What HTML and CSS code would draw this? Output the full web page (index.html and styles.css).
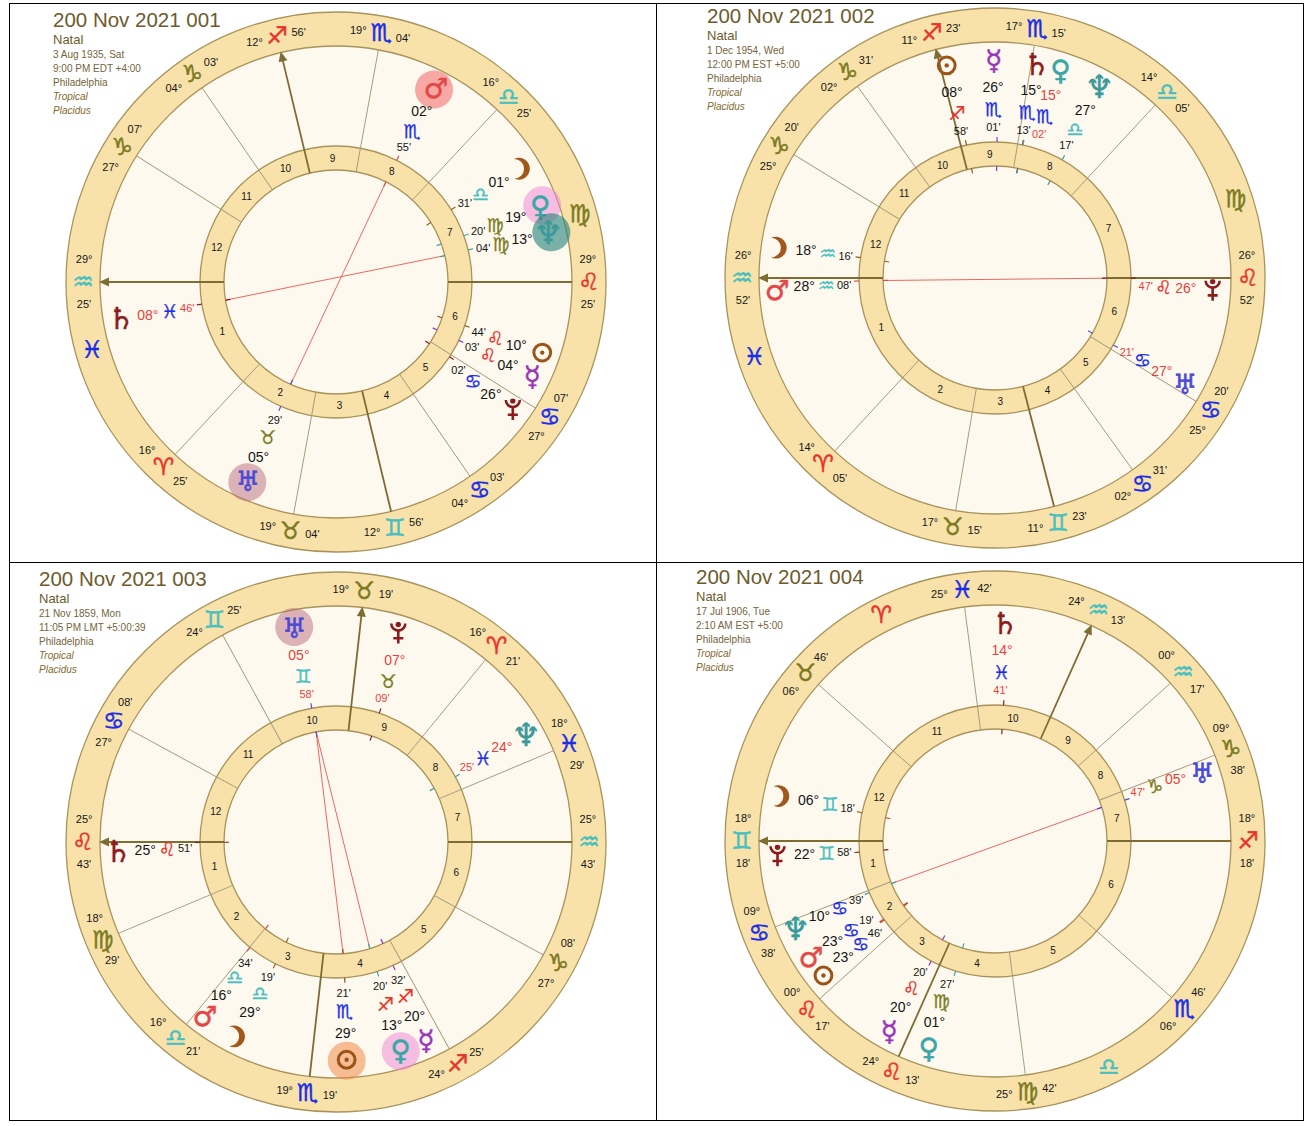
FILE: index.html
```html
<!DOCTYPE html>
<html lang="en">
<head>
<meta charset="utf-8">
<title>Natal charts</title>
<link rel="stylesheet" href="styles.css">
</head>
<body>
<div class="sheet">

<!-- ============ CHART 1 ============ -->
<section class="panel p1">
<svg class="chart" width="646" height="558" viewBox="0 0 646 558">
<defs>
<symbol id="plu" viewBox="-10 -11 20 22">
<path d="M-7,-9.5 A7,7 0 0 0 7,-9.5" fill="none" stroke="currentColor" stroke-width="2.6"/>
<circle cx="0" cy="-8.6" r="2.7" fill="currentColor"/>
<line x1="0" y1="-2.5" x2="0" y2="10.5" stroke="currentColor" stroke-width="2.6"/>
<line x1="-5" y1="5.2" x2="5" y2="5.2" stroke="currentColor" stroke-width="2.6"/>
</symbol>
<symbol id="sun" viewBox="-11 -11 22 22">
<circle r="8.4" fill="none" stroke="currentColor" stroke-width="3"/>
<circle r="2.2" fill="currentColor"/>
</symbol>
<symbol id="moo" viewBox="-11 -11 22 22">
<path d="M-7.4,-9 A10,10 0 1 1 -7.4,9 A9,9 0 0 0 -7.4,-9 Z" fill="currentColor"/>
</symbol>
</defs>
<g transform="translate(326 278)">
<circle class="ring" r="270"/><circle class="field" r="236"/><circle class="ring" r="136"/><circle class="field" r="112"/>
<line class="hl" transform="rotate(-227)" x1="112" x2="236"/>
<line class="hl" transform="rotate(-259.65)" x1="112" x2="236"/>
<line class="hl" transform="rotate(-304.6)" x1="112" x2="236"/>
<line class="hl" transform="rotate(-327.7)" x1="112" x2="236"/>
<line class="hl" transform="rotate(-47)" x1="112" x2="236"/>
<line class="hl" transform="rotate(-79.65)" x1="112" x2="236"/>
<line class="hl" transform="rotate(-124.6)" x1="112" x2="236"/>
<line class="hl" transform="rotate(-147.7)" x1="112" x2="236"/>
<line class="ax" transform="rotate(0)" x1="112" x2="236"/>
<line class="ax" transform="rotate(-283.5)" x1="112" x2="236"/>
<g transform="rotate(-180)"><line class="ax" x1="112" x2="230"/><polygon class="axp" points="237,0 227,-4.5 227,4.5"/></g>
<g transform="rotate(-103.5)"><line class="ax" x1="112" x2="230"/><polygon class="axp" points="237,0 227,-4.5 227,4.5"/></g>
<line class="asp" x1="-110.5" y1="18.2" x2="108.8" y2="-26.4"/>
<line class="asp" x1="50" y1="-100.2" x2="-45.4" y2="102.4"/>
<g class="ma" transform="rotate(-63.5)"><line class="tk" x1="107" x2="112"/><line class="tk" x1="136" x2="141"/></g>
<g class="mo" transform="rotate(-32.1)"><line class="tk" x1="107" x2="112"/><line class="tk" x1="136" x2="141"/></g>
<g class="ve" transform="rotate(-19.9)"><line class="tk" x1="107" x2="112"/><line class="tk" x1="136" x2="141"/></g>
<g class="ne" transform="rotate(-13.65)"><line class="tk" x1="107" x2="112"/><line class="tk" x1="136" x2="141"/></g>
<g class="su" transform="rotate(-341.3)"><line class="tk" x1="107" x2="112"/><line class="tk" x1="136" x2="141"/></g>
<g class="me" transform="rotate(-334.6)"><line class="tk" x1="107" x2="112"/><line class="tk" x1="136" x2="141"/></g>
<g class="pl" transform="rotate(-326.6)"><line class="tk" x1="107" x2="112"/><line class="tk" x1="136" x2="141"/></g>
<g class="sa" transform="rotate(-189.35)"><line class="tk" x1="107" x2="112"/><line class="tk" x1="136" x2="141"/></g>
<g class="ur" transform="rotate(-246.06)"><line class="tk" x1="107" x2="112"/><line class="tk" x1="136" x2="141"/></g>
<text class="hn" transform="rotate(-203.5) translate(124) rotate(203.5)">1</text>
<text class="hn" transform="rotate(-243.3) translate(124) rotate(243.3)">2</text>
<text class="hn" transform="rotate(-271.6) translate(124) rotate(271.6)">3</text>
<text class="hn" transform="rotate(-294) translate(124) rotate(294)">4</text>
<text class="hn" transform="rotate(-316.2) translate(124) rotate(316.2)">5</text>
<text class="hn" transform="rotate(-343.9) translate(124) rotate(343.9)">6</text>
<text class="hn" transform="rotate(-23.5) translate(124) rotate(23.5)">7</text>
<text class="hn" transform="rotate(-63.3) translate(124) rotate(63.3)">8</text>
<text class="hn" transform="rotate(-91.6) translate(124) rotate(91.6)">9</text>
<text class="hn" transform="rotate(-114) translate(124) rotate(114)">10</text>
<text class="hn" transform="rotate(-136.2) translate(124) rotate(136.2)">11</text>
<text class="hn" transform="rotate(-163.9) translate(124) rotate(163.9)">12</text>
<text class="cd" transform="rotate(-174.7) translate(253) rotate(174.7)">29°</text><text class="cs ai" transform="rotate(-180) translate(253) rotate(180)">♒&#xFE0E;</text><text class="cd" transform="rotate(-185) translate(253) rotate(185)">25'</text>
<text class="cd" transform="rotate(-221.7) translate(253) rotate(221.7)">16°</text><text class="cs fi" transform="rotate(-227) translate(253) rotate(227)">♈&#xFE0E;</text><text class="cd" transform="rotate(-232) translate(253) rotate(232)">25'</text>
<text class="cd" transform="rotate(-254.35) translate(253) rotate(254.35)">19°</text><text class="cs ea" transform="rotate(-259.65) translate(253) rotate(259.65)">♉&#xFE0E;</text><text class="cd" transform="rotate(-264.65) translate(253) rotate(264.65)">04'</text>
<text class="cd" transform="rotate(-278.2) translate(253) rotate(278.2)">12°</text><text class="cs ai" transform="rotate(-283.5) translate(253) rotate(283.5)">♊&#xFE0E;</text><text class="cd" transform="rotate(-288.5) translate(253) rotate(288.5)">56'</text>
<text class="cd" transform="rotate(-299.3) translate(253) rotate(299.3)">04°</text><text class="cs wa" transform="rotate(-304.6) translate(253) rotate(304.6)">♋&#xFE0E;</text><text class="cd" transform="rotate(-309.6) translate(253) rotate(309.6)">03'</text>
<text class="cd" transform="rotate(-322.4) translate(253) rotate(322.4)">27°</text><text class="cs wa" transform="rotate(-327.7) translate(253) rotate(327.7)">♋&#xFE0E;</text><text class="cd" transform="rotate(-332.7) translate(253) rotate(332.7)">07'</text>
<text class="cd" transform="rotate(-5.3) translate(253) rotate(5.3)">29°</text><text class="cs fi" transform="rotate(0) translate(253) rotate(0)">♌&#xFE0E;</text><text class="cd" transform="rotate(-355) translate(253) rotate(355)">25'</text>
<text class="cd" transform="rotate(-52.3) translate(253) rotate(52.3)">16°</text><text class="cs ai" transform="rotate(-47) translate(253) rotate(47)">♎&#xFE0E;</text><text class="cd" transform="rotate(-42) translate(253) rotate(42)">25'</text>
<text class="cd" transform="rotate(-84.95) translate(253) rotate(84.95)">19°</text><text class="cs wa" transform="rotate(-79.65) translate(253) rotate(79.65)">♏&#xFE0E;</text><text class="cd" transform="rotate(-74.65) translate(253) rotate(74.65)">04'</text>
<text class="cd" transform="rotate(-108.8) translate(253) rotate(108.8)">12°</text><text class="cs fi" transform="rotate(-103.5) translate(253) rotate(103.5)">♐&#xFE0E;</text><text class="cd" transform="rotate(-98.5) translate(253) rotate(98.5)">56'</text>
<text class="cd" transform="rotate(-129.9) translate(253) rotate(129.9)">04°</text><text class="cs ea" transform="rotate(-124.6) translate(253) rotate(124.6)">♑&#xFE0E;</text><text class="cd" transform="rotate(-119.6) translate(253) rotate(119.6)">03'</text>
<text class="cd" transform="rotate(-153) translate(253) rotate(153)">27°</text><text class="cs ea" transform="rotate(-147.7) translate(253) rotate(147.7)">♑&#xFE0E;</text><text class="cd" transform="rotate(-142.7) translate(253) rotate(142.7)">07'</text>
<text class="cs wa" transform="rotate(-195.6) translate(253) rotate(195.6)">♓&#xFE0E;</text>
<text class="cs ea" transform="rotate(-15.6) translate(253) rotate(15.6)">♍&#xFE0E;</text>
<!-- planets -->
<circle class="hlc h-ma" r="19" transform="rotate(-63) translate(216)"/>
<text class="pg ma" transform="rotate(-62.7) translate(218) rotate(62.7)">♂</text>
<text class="pd" transform="rotate(-63.3) translate(191) rotate(63.3)">02°</text><text class="ps wa" transform="rotate(-63.3) translate(169) rotate(63.3)">♏&#xFE0E;</text><text class="pm" transform="rotate(-63.3) translate(151) rotate(63.3)">55'</text>
<use href="#moo" class="mo" x="-12" y="-12" width="24" height="24" transform="rotate(-31.3) translate(218) rotate(31.3)"/>
<text class="pd" transform="rotate(-31.4) translate(191) rotate(31.4)">01°</text><text class="ps ai" transform="rotate(-31.4) translate(169) rotate(31.4)">♎&#xFE0E;</text><text class="pm" transform="rotate(-31.4) translate(151) rotate(31.4)">31'</text>
<circle class="hlc h-ve" r="19" transform="rotate(-20.4) translate(220)"/>
<text class="pg ve" transform="rotate(-20.4) translate(218) rotate(20.4)">♀</text>
<text class="pd" transform="rotate(-19.8) translate(191) rotate(19.8)">19°</text><text class="ps ea" transform="rotate(-19.8) translate(169) rotate(19.8)">♍&#xFE0E;</text><text class="pm" transform="rotate(-19.8) translate(151) rotate(19.8)">20'</text>
<circle class="hlc h-ne" r="19" transform="rotate(-13) translate(221)"/>
<text class="pg ne" transform="rotate(-13.1) translate(218) rotate(13.1)">♆</text>
<text class="pd" transform="rotate(-13) translate(191) rotate(13)">13°</text><text class="ps ea" transform="rotate(-13) translate(169) rotate(13)">♍&#xFE0E;</text><text class="pm" transform="rotate(-13) translate(151) rotate(13)">04'</text>
<use href="#sun" class="su" x="-11" y="-11" width="22" height="22" transform="rotate(-341.1) translate(218) rotate(341.1)"/>
<text class="pd" transform="rotate(-340.8) translate(191) rotate(340.8)">10°</text><text class="ps fi" transform="rotate(-340.8) translate(169) rotate(340.8)">♌&#xFE0E;</text><text class="pm" transform="rotate(-340.8) translate(151) rotate(340.8)">44'</text>
<text class="pg me" transform="rotate(-334.3) translate(218) rotate(334.3)">☿</text>
<text class="pd" transform="rotate(-334.3) translate(191) rotate(334.3)">04°</text><text class="ps fi" transform="rotate(-334.3) translate(169) rotate(334.3)">♌&#xFE0E;</text><text class="pm" transform="rotate(-334.3) translate(151) rotate(334.3)">03'</text>
<use href="#plu" class="pl" x="-10" y="-11" width="20" height="22" transform="rotate(-324.2) translate(218) rotate(324.2)"/>
<text class="pd" transform="rotate(-324.2) translate(191) rotate(324.2)">26°</text><text class="ps wa" transform="rotate(-324.2) translate(169) rotate(324.2)">♋&#xFE0E;</text><text class="pm" transform="rotate(-324.2) translate(151) rotate(324.2)">02'</text>
<text class="pg sa" transform="rotate(-189.7) translate(218) rotate(189.7)">♄</text>
<text class="pd rt" transform="rotate(-189.8) translate(191) rotate(189.8)">08°</text><text class="ps wa" transform="rotate(-189.8) translate(169) rotate(189.8)">♓&#xFE0E;</text><text class="pm rt" transform="rotate(-189.8) translate(151) rotate(189.8)">46'</text>
<circle class="hlc h-ur" r="19" transform="rotate(-246.1) translate(219)"/>
<text class="pg ur" transform="rotate(-246.1) translate(218) rotate(246.1)">♅</text>
<text class="pd" transform="rotate(-246.1) translate(191) rotate(246.1)">05°</text><text class="ps ea" transform="rotate(-246.1) translate(169) rotate(246.1)">♉&#xFE0E;</text><text class="pm" transform="rotate(-246.1) translate(151) rotate(246.1)">29'</text>
</g>
</svg>
<div class="head">
<div class="title">200 Nov 2021 001</div>
<div class="kind">Natal</div>
<div class="meta">3 Aug 1935, Sat</div>
<div class="meta">9:00 PM EDT +4:00</div>
<div class="meta">Philadelphia</div>
<div class="meta it">Tropical</div>
<div class="meta it">Placidus</div>
</div>
</section>

<!-- ============ CHART 2 ============ -->
<section class="panel p2">
<svg class="chart" width="646" height="558" viewBox="0 0 646 558">
<g transform="translate(338 274)">
<circle class="ring" r="270"/><circle class="field" r="236"/><circle class="ring" r="136"/><circle class="field" r="112"/>
<line class="hl" transform="rotate(-227.2)" x1="112" x2="236"/>
<line class="hl" transform="rotate(-260.4)" x1="112" x2="236"/>
<line class="hl" transform="rotate(-305.65)" x1="112" x2="236"/>
<line class="hl" transform="rotate(-328.46)" x1="112" x2="236"/>
<line class="hl" transform="rotate(-47.2)" x1="112" x2="236"/>
<line class="hl" transform="rotate(-80.4)" x1="112" x2="236"/>
<line class="hl" transform="rotate(-125.65)" x1="112" x2="236"/>
<line class="hl" transform="rotate(-148.46)" x1="112" x2="236"/>
<line class="ax" transform="rotate(0)" x1="112" x2="236"/>
<line class="ax" transform="rotate(-284.5)" x1="112" x2="236"/>
<g transform="rotate(-180)"><line class="ax" x1="112" x2="230"/><polygon class="axp" points="237,0 227,-4.5 227,4.5"/></g>
<g transform="rotate(-104.5)"><line class="ax" x1="112" x2="230"/><polygon class="axp" points="237,0 227,-4.5 227,4.5"/></g>
<line class="asp" x1="-112" y1="2.5" x2="112" y2="0.2"/>
<g class="su" transform="rotate(-102.1)"><line class="tk" x1="107" x2="112"/><line class="tk" x1="136" x2="141"/></g>
<g class="me" transform="rotate(-89.15)"><line class="tk" x1="107" x2="112"/><line class="tk" x1="136" x2="141"/></g>
<g class="sa" transform="rotate(-78.35)"><line class="tk" x1="107" x2="112"/><line class="tk" x1="136" x2="141"/></g>
<g class="ve" transform="rotate(-78.16)"><line class="tk" x1="107" x2="112"/><line class="tk" x1="136" x2="141"/></g>
<g class="ne" transform="rotate(-60.41)"><line class="tk" x1="107" x2="112"/><line class="tk" x1="136" x2="141"/></g>
<g class="mo" transform="rotate(-171.4)"><line class="tk" x1="107" x2="112"/><line class="tk" x1="136" x2="141"/></g>
<g class="ma" transform="rotate(-181.26)"><line class="tk" x1="107" x2="112"/><line class="tk" x1="136" x2="141"/></g>
<g class="pl" transform="rotate(-359.91)"><line class="tk" x1="107" x2="112"/><line class="tk" x1="136" x2="141"/></g>
<g class="ur" transform="rotate(-330.48)"><line class="tk" x1="107" x2="112"/><line class="tk" x1="136" x2="141"/></g>
<text class="hn" transform="rotate(-203.6) translate(124) rotate(203.6)">1</text>
<text class="hn" transform="rotate(-243.8) translate(124) rotate(243.8)">2</text>
<text class="hn" transform="rotate(-272.45) translate(124) rotate(272.45)">3</text>
<text class="hn" transform="rotate(-295.08) translate(124) rotate(295.08)">4</text>
<text class="hn" transform="rotate(-317.06) translate(124) rotate(317.06)">5</text>
<text class="hn" transform="rotate(-344.23) translate(124) rotate(344.23)">6</text>
<text class="hn" transform="rotate(-23.6) translate(124) rotate(23.6)">7</text>
<text class="hn" transform="rotate(-63.8) translate(124) rotate(63.8)">8</text>
<text class="hn" transform="rotate(-92.45) translate(124) rotate(92.45)">9</text>
<text class="hn" transform="rotate(-115.08) translate(124) rotate(115.08)">10</text>
<text class="hn" transform="rotate(-137.06) translate(124) rotate(137.06)">11</text>
<text class="hn" transform="rotate(-164.23) translate(124) rotate(164.23)">12</text>
<text class="cd" transform="rotate(-174.7) translate(253) rotate(174.7)">26°</text><text class="cs ai" transform="rotate(-180) translate(253) rotate(180)">♒&#xFE0E;</text><text class="cd" transform="rotate(-185) translate(253) rotate(185)">52'</text>
<text class="cd" transform="rotate(-221.9) translate(253) rotate(221.9)">14°</text><text class="cs fi" transform="rotate(-227.2) translate(253) rotate(227.2)">♈&#xFE0E;</text><text class="cd" transform="rotate(-232.2) translate(253) rotate(232.2)">05'</text>
<text class="cd" transform="rotate(-255.1) translate(253) rotate(255.1)">17°</text><text class="cs ea" transform="rotate(-260.4) translate(253) rotate(260.4)">♉&#xFE0E;</text><text class="cd" transform="rotate(-265.4) translate(253) rotate(265.4)">15'</text>
<text class="cd" transform="rotate(-279.2) translate(253) rotate(279.2)">11°</text><text class="cs ai" transform="rotate(-284.5) translate(253) rotate(284.5)">♊&#xFE0E;</text><text class="cd" transform="rotate(-289.5) translate(253) rotate(289.5)">23'</text>
<text class="cd" transform="rotate(-300.35) translate(253) rotate(300.35)">02°</text><text class="cs wa" transform="rotate(-305.65) translate(253) rotate(305.65)">♋&#xFE0E;</text><text class="cd" transform="rotate(-310.65) translate(253) rotate(310.65)">31'</text>
<text class="cd" transform="rotate(-323.16) translate(253) rotate(323.16)">25°</text><text class="cs wa" transform="rotate(-328.46) translate(253) rotate(328.46)">♋&#xFE0E;</text><text class="cd" transform="rotate(-333.46) translate(253) rotate(333.46)">20'</text>
<text class="cd" transform="rotate(-5.3) translate(253) rotate(5.3)">26°</text><text class="cs fi" transform="rotate(0) translate(253) rotate(0)">♌&#xFE0E;</text><text class="cd" transform="rotate(-355) translate(253) rotate(355)">52'</text>
<text class="cd" transform="rotate(-52.5) translate(253) rotate(52.5)">14°</text><text class="cs ai" transform="rotate(-47.2) translate(253) rotate(47.2)">♎&#xFE0E;</text><text class="cd" transform="rotate(-42.2) translate(253) rotate(42.2)">05'</text>
<text class="cd" transform="rotate(-85.7) translate(253) rotate(85.7)">17°</text><text class="cs wa" transform="rotate(-80.4) translate(253) rotate(80.4)">♏&#xFE0E;</text><text class="cd" transform="rotate(-75.4) translate(253) rotate(75.4)">15'</text>
<text class="cd" transform="rotate(-109.8) translate(253) rotate(109.8)">11°</text><text class="cs fi" transform="rotate(-104.5) translate(253) rotate(104.5)">♐&#xFE0E;</text><text class="cd" transform="rotate(-99.5) translate(253) rotate(99.5)">23'</text>
<text class="cd" transform="rotate(-130.95) translate(253) rotate(130.95)">02°</text><text class="cs ea" transform="rotate(-125.65) translate(253) rotate(125.65)">♑&#xFE0E;</text><text class="cd" transform="rotate(-120.65) translate(253) rotate(120.65)">31'</text>
<text class="cd" transform="rotate(-153.76) translate(253) rotate(153.76)">25°</text><text class="cs ea" transform="rotate(-148.46) translate(253) rotate(148.46)">♑&#xFE0E;</text><text class="cd" transform="rotate(-143.46) translate(253) rotate(143.46)">20'</text>
<text class="cs wa" transform="rotate(-198.1) translate(253) rotate(198.1)">♓&#xFE0E;</text>
<text class="cs ea" transform="rotate(-18.1) translate(253) rotate(18.1)">♍&#xFE0E;</text>
<use href="#sun" class="su" x="-11" y="-11" width="22" height="22" transform="rotate(-102.8) translate(218) rotate(102.8)"/>
<text class="pd" transform="rotate(-103) translate(191) rotate(103)">08°</text><text class="ps fi" transform="rotate(-103) translate(169) rotate(103)">♐&#xFE0E;</text><text class="pm" transform="rotate(-103) translate(151) rotate(103)">58'</text>
<text class="pg me" transform="rotate(-90.3) translate(218) rotate(90.3)">☿</text>
<text class="pd" transform="rotate(-90.6) translate(191) rotate(90.6)">26°</text><text class="ps wa" transform="rotate(-90.6) translate(169) rotate(90.6)">♏&#xFE0E;</text><text class="pm" transform="rotate(-90.6) translate(151) rotate(90.6)">01'</text>
<text class="pg sa" transform="rotate(-79) translate(218) rotate(79)">♄</text>
<text class="pd" transform="rotate(-79.1) translate(191) rotate(79.1)">15°</text><text class="ps wa" transform="rotate(-79.1) translate(169) rotate(79.1)">♏&#xFE0E;</text><text class="pm" transform="rotate(-79.1) translate(151) rotate(79.1)">13'</text>
<text class="pg ve" transform="rotate(-72.5) translate(218) rotate(72.5)">♀</text>
<text class="pd rt" transform="rotate(-73) translate(191) rotate(73)">15°</text><text class="ps wa" transform="rotate(-73) translate(169) rotate(73)">♏&#xFE0E;</text><text class="pm rt" transform="rotate(-73) translate(151) rotate(73)">02'</text>
<text class="pg ne" transform="rotate(-61.4) translate(218) rotate(61.4)">♆</text>
<text class="pd" transform="rotate(-61.8) translate(191) rotate(61.8)">27°</text><text class="ps ai" transform="rotate(-61.8) translate(169) rotate(61.8)">♎&#xFE0E;</text><text class="pm" transform="rotate(-61.8) translate(151) rotate(61.8)">17'</text>
<use href="#moo" class="mo" x="-12" y="-12" width="24" height="24" transform="rotate(-172) translate(218) rotate(172)"/>
<text class="pd" transform="rotate(-171.5) translate(191) rotate(171.5)">18°</text><text class="ps ai" transform="rotate(-171.5) translate(169) rotate(171.5)">♒&#xFE0E;</text><text class="pm" transform="rotate(-171.5) translate(151) rotate(171.5)">16'</text>
<text class="pg ma" transform="rotate(-183.3) translate(218) rotate(183.3)">♂</text>
<text class="pd" transform="rotate(-182.5) translate(191) rotate(182.5)">28°</text><text class="ps ai" transform="rotate(-182.5) translate(169) rotate(182.5)">♒&#xFE0E;</text><text class="pm" transform="rotate(-182.5) translate(151) rotate(182.5)">08'</text>
<use href="#plu" class="pl" x="-10" y="-11" width="20" height="22" transform="rotate(-356.8) translate(218) rotate(356.8)"/>
<text class="pd rt" transform="rotate(-357) translate(191) rotate(357)">26°</text><text class="ps fi" transform="rotate(-357) translate(169) rotate(357)">♌&#xFE0E;</text><text class="pm rt" transform="rotate(-357) translate(151) rotate(357)">47'</text>
<text class="pg ur" transform="rotate(-330.7) translate(218) rotate(330.7)">♅</text>
<text class="pd rt" transform="rotate(-330.8) translate(191) rotate(330.8)">27°</text><text class="ps wa" transform="rotate(-330.8) translate(169) rotate(330.8)">♋&#xFE0E;</text><text class="pm rt" transform="rotate(-330.8) translate(151) rotate(330.8)">21'</text>
</g>
</svg>
<div class="head">
<div class="title">200 Nov 2021 002</div>
<div class="kind">Natal</div>
<div class="meta">1 Dec 1954, Wed</div>
<div class="meta">12:00 PM EST +5:00</div>
<div class="meta">Philadelphia</div>
<div class="meta it">Tropical</div>
<div class="meta it">Placidus</div>
</div>
</section>

<!-- ============ CHART 3 ============ -->
<section class="panel p3">
<svg class="chart" width="646" height="557" viewBox="0 0 646 557">
<g transform="translate(326 279)">
<circle class="ring" r="270"/><circle class="field" r="236"/><circle class="ring" r="136"/><circle class="field" r="112"/>
<line class="hl" transform="rotate(-202.76)" x1="112" x2="236"/>
<line class="hl" transform="rotate(-230.63)" x1="112" x2="236"/>
<line class="hl" transform="rotate(-298.7)" x1="112" x2="236"/>
<line class="hl" transform="rotate(-331.41)" x1="112" x2="236"/>
<line class="hl" transform="rotate(-22.76)" x1="112" x2="236"/>
<line class="hl" transform="rotate(-50.63)" x1="112" x2="236"/>
<line class="hl" transform="rotate(-118.7)" x1="112" x2="236"/>
<line class="hl" transform="rotate(-151.41)" x1="112" x2="236"/>
<line class="ax" transform="rotate(0)" x1="112" x2="236"/>
<line class="ax" transform="rotate(-263.6)" x1="112" x2="236"/>
<g transform="rotate(-180)"><line class="ax" x1="112" x2="230"/><polygon class="axp" points="237,0 227,-4.5 227,4.5"/></g>
<g transform="rotate(-83.6)"><line class="ax" x1="112" x2="230"/><polygon class="axp" points="237,0 227,-4.5 227,4.5"/></g>
<line class="asp" x1="-19.9" y1="-110.2" x2="7.1" y2="111.8"/>
<line class="asp" x1="-19.9" y1="-110.2" x2="33.9" y2="106.7"/>
<g class="ur" transform="rotate(-100.25)"><line class="tk" x1="107" x2="112"/><line class="tk" x1="136" x2="141"/></g>
<g class="pl" transform="rotate(-71.43)"><line class="tk" x1="107" x2="112"/><line class="tk" x1="136" x2="141"/></g>
<g class="ne" transform="rotate(-28.7)"><line class="tk" x1="107" x2="112"/><line class="tk" x1="136" x2="141"/></g>
<g class="sa" transform="rotate(-180.13)"><line class="tk" x1="107" x2="112"/><line class="tk" x1="136" x2="141"/></g>
<g class="ma" transform="rotate(-230.85)"><line class="tk" x1="107" x2="112"/><line class="tk" x1="136" x2="141"/></g>
<g class="mo" transform="rotate(-243.6)"><line class="tk" x1="107" x2="112"/><line class="tk" x1="136" x2="141"/></g>
<g class="su" transform="rotate(-273.63)"><line class="tk" x1="107" x2="112"/><line class="tk" x1="136" x2="141"/></g>
<g class="ve" transform="rotate(-287.61)"><line class="tk" x1="107" x2="112"/><line class="tk" x1="136" x2="141"/></g>
<g class="me" transform="rotate(-294.81)"><line class="tk" x1="107" x2="112"/><line class="tk" x1="136" x2="141"/></g>
<text class="hn" transform="rotate(-191.4) translate(124) rotate(191.4)">1</text>
<text class="hn" transform="rotate(-216.7) translate(124) rotate(216.7)">2</text>
<text class="hn" transform="rotate(-247.1) translate(124) rotate(247.1)">3</text>
<text class="hn" transform="rotate(-281.15) translate(124) rotate(281.15)">4</text>
<text class="hn" transform="rotate(-315.05) translate(124) rotate(315.05)">5</text>
<text class="hn" transform="rotate(-345.7) translate(124) rotate(345.7)">6</text>
<text class="hn" transform="rotate(-11.4) translate(124) rotate(11.4)">7</text>
<text class="hn" transform="rotate(-36.7) translate(124) rotate(36.7)">8</text>
<text class="hn" transform="rotate(-67.1) translate(124) rotate(67.1)">9</text>
<text class="hn" transform="rotate(-101.15) translate(124) rotate(101.15)">10</text>
<text class="hn" transform="rotate(-135.05) translate(124) rotate(135.05)">11</text>
<text class="hn" transform="rotate(-165.7) translate(124) rotate(165.7)">12</text>
<text class="cd" transform="rotate(-174.7) translate(253) rotate(174.7)">25°</text><text class="cs fi" transform="rotate(-180) translate(253) rotate(180)">♌&#xFE0E;</text><text class="cd" transform="rotate(-185) translate(253) rotate(185)">43'</text>
<text class="cd" transform="rotate(-197.46) translate(253) rotate(197.46)">18°</text><text class="cs ea" transform="rotate(-202.76) translate(253) rotate(202.76)">♍&#xFE0E;</text><text class="cd" transform="rotate(-207.76) translate(253) rotate(207.76)">29'</text>
<text class="cd" transform="rotate(-225.33) translate(253) rotate(225.33)">16°</text><text class="cs ai" transform="rotate(-230.63) translate(253) rotate(230.63)">♎&#xFE0E;</text><text class="cd" transform="rotate(-235.63) translate(253) rotate(235.63)">21'</text>
<text class="cd" transform="rotate(-258.3) translate(253) rotate(258.3)">19°</text><text class="cs wa" transform="rotate(-263.6) translate(253) rotate(263.6)">♏&#xFE0E;</text><text class="cd" transform="rotate(-268.6) translate(253) rotate(268.6)">19'</text>
<text class="cd" transform="rotate(-293.4) translate(253) rotate(293.4)">24°</text><text class="cs fi" transform="rotate(-298.7) translate(253) rotate(298.7)">♐&#xFE0E;</text><text class="cd" transform="rotate(-303.7) translate(253) rotate(303.7)">25'</text>
<text class="cd" transform="rotate(-326.11) translate(253) rotate(326.11)">27°</text><text class="cs ea" transform="rotate(-331.41) translate(253) rotate(331.41)">♑&#xFE0E;</text><text class="cd" transform="rotate(-336.41) translate(253) rotate(336.41)">08'</text>
<text class="cd" transform="rotate(-5.3) translate(253) rotate(5.3)">25°</text><text class="cs ai" transform="rotate(0) translate(253) rotate(0)">♒&#xFE0E;</text><text class="cd" transform="rotate(-355) translate(253) rotate(355)">43'</text>
<text class="cd" transform="rotate(-28.06) translate(253) rotate(28.06)">18°</text><text class="cs wa" transform="rotate(-22.76) translate(253) rotate(22.76)">♓&#xFE0E;</text><text class="cd" transform="rotate(-17.76) translate(253) rotate(17.76)">29'</text>
<text class="cd" transform="rotate(-55.93) translate(253) rotate(55.93)">16°</text><text class="cs fi" transform="rotate(-50.63) translate(253) rotate(50.63)">♈&#xFE0E;</text><text class="cd" transform="rotate(-45.63) translate(253) rotate(45.63)">21'</text>
<text class="cd" transform="rotate(-88.9) translate(253) rotate(88.9)">19°</text><text class="cs ea" transform="rotate(-83.6) translate(253) rotate(83.6)">♉&#xFE0E;</text><text class="cd" transform="rotate(-78.6) translate(253) rotate(78.6)">19'</text>
<text class="cd" transform="rotate(-124) translate(253) rotate(124)">24°</text><text class="cs ai" transform="rotate(-118.7) translate(253) rotate(118.7)">♊&#xFE0E;</text><text class="cd" transform="rotate(-113.7) translate(253) rotate(113.7)">25'</text>
<text class="cd" transform="rotate(-156.71) translate(253) rotate(156.71)">27°</text><text class="cs wa" transform="rotate(-151.41) translate(253) rotate(151.41)">♋&#xFE0E;</text><text class="cd" transform="rotate(-146.41) translate(253) rotate(146.41)">08'</text>
<circle class="hlc h-ur" r="19" transform="rotate(-101) translate(219)"/>
<text class="pg ur" transform="rotate(-101) translate(218) rotate(101)">♅</text>
<text class="pd rt" transform="rotate(-101.2) translate(191) rotate(101.2)">05°</text><text class="ps ai" transform="rotate(-101.2) translate(169) rotate(101.2)">♊&#xFE0E;</text><text class="pm rt" transform="rotate(-101.2) translate(151) rotate(101.2)">58'</text>
<use href="#plu" class="pl" x="-10" y="-11" width="20" height="22" transform="rotate(-73.4) translate(218) rotate(73.4)"/>
<text class="pd rt" transform="rotate(-72.1) translate(191) rotate(72.1)">07°</text><text class="ps ea" transform="rotate(-72.1) translate(169) rotate(72.1)">♉&#xFE0E;</text><text class="pm rt" transform="rotate(-72.1) translate(151) rotate(72.1)">09'</text>
<text class="pg ne" transform="rotate(-29.3) translate(218) rotate(29.3)">♆</text>
<text class="pd rt" transform="rotate(-29.8) translate(191) rotate(29.8)">24°</text><text class="ps wa" transform="rotate(-29.8) translate(169) rotate(29.8)">♓&#xFE0E;</text><text class="pm rt" transform="rotate(-29.8) translate(151) rotate(29.8)">25'</text>
<text class="pg sa" transform="rotate(-182.6) translate(218) rotate(182.6)">♄</text>
<text class="pd" transform="rotate(-182.4) translate(191) rotate(182.4)">25°</text><text class="ps fi" transform="rotate(-182.4) translate(169) rotate(182.4)">♌&#xFE0E;</text><text class="pm" transform="rotate(-182.4) translate(151) rotate(182.4)">51'</text>
<text class="pg ma" transform="rotate(-233.1) translate(218) rotate(233.1)">♂</text>
<text class="pd" transform="rotate(-233.1) translate(191) rotate(233.1)">16°</text><text class="ps ai" transform="rotate(-233.1) translate(169) rotate(233.1)">♎&#xFE0E;</text><text class="pm" transform="rotate(-233.1) translate(151) rotate(233.1)">34'</text>
<use href="#moo" class="mo" x="-12" y="-12" width="24" height="24" transform="rotate(-243.1) translate(218) rotate(243.1)"/>
<text class="pd" transform="rotate(-243.2) translate(191) rotate(243.2)">29°</text><text class="ps ai" transform="rotate(-243.2) translate(169) rotate(243.2)">♎&#xFE0E;</text><text class="pm" transform="rotate(-243.2) translate(151) rotate(243.2)">19'</text>
<circle class="hlc h-su" r="19" transform="rotate(-272.8) translate(219)"/>
<use href="#sun" class="su" x="-11" y="-11" width="22" height="22" transform="rotate(-272.8) translate(218) rotate(272.8)"/>
<text class="pd" transform="rotate(-272.9) translate(191) rotate(272.9)">29°</text><text class="ps wa" transform="rotate(-272.9) translate(169) rotate(272.9)">♏&#xFE0E;</text><text class="pm" transform="rotate(-272.9) translate(151) rotate(272.9)">21'</text>
<circle class="hlc h-ve" r="19" transform="rotate(-287.2) translate(219)"/>
<text class="pg ve" transform="rotate(-287.2) translate(218) rotate(287.2)">♀</text>
<text class="pd" transform="rotate(-287) translate(191) rotate(287)">13°</text><text class="ps fi" transform="rotate(-287) translate(169) rotate(287)">♐&#xFE0E;</text><text class="pm" transform="rotate(-287) translate(151) rotate(287)">20'</text>
<text class="pg me" transform="rotate(-294.4) translate(218) rotate(294.4)">☿</text>
<text class="pd" transform="rotate(-294.3) translate(191) rotate(294.3)">20°</text><text class="ps fi" transform="rotate(-294.3) translate(169) rotate(294.3)">♐&#xFE0E;</text><text class="pm" transform="rotate(-294.3) translate(151) rotate(294.3)">32'</text>
</g>
</svg>
<div class="head">
<div class="title">200 Nov 2021 003</div>
<div class="kind">Natal</div>
<div class="meta">21 Nov 1859, Mon</div>
<div class="meta">11:05 PM LMT +5:00:39</div>
<div class="meta">Philadelphia</div>
<div class="meta it">Tropical</div>
<div class="meta it">Placidus</div>
</div>
</section>

<!-- ============ CHART 4 ============ -->
<section class="panel p4">
<svg class="chart" width="646" height="557" viewBox="0 0 646 557">
<g transform="translate(338 278)">
<circle class="ring" r="270"/><circle class="field" r="236"/><circle class="ring" r="136"/><circle class="field" r="112"/>
<line class="hl" transform="rotate(-201.33)" x1="112" x2="236"/>
<line class="hl" transform="rotate(-221.98)" x1="112" x2="236"/>
<line class="hl" transform="rotate(-277.4)" x1="112" x2="236"/>
<line class="hl" transform="rotate(-318.47)" x1="112" x2="236"/>
<line class="hl" transform="rotate(-21.33)" x1="112" x2="236"/>
<line class="hl" transform="rotate(-41.98)" x1="112" x2="236"/>
<line class="hl" transform="rotate(-97.4)" x1="112" x2="236"/>
<line class="hl" transform="rotate(-138.47)" x1="112" x2="236"/>
<line class="ax" transform="rotate(0)" x1="112" x2="236"/>
<line class="ax" transform="rotate(-245.92)" x1="112" x2="236"/>
<g transform="rotate(-180)"><line class="ax" x1="112" x2="230"/><polygon class="axp" points="237,0 227,-4.5 227,4.5"/></g>
<g transform="rotate(-65.92)"><line class="ax" x1="112" x2="230"/><polygon class="axp" points="237,0 227,-4.5 227,4.5"/></g>
<line class="asp" x1="-103.6" y1="42.6" x2="106.8" y2="-33.6"/>
<g class="sa" transform="rotate(-86.38)"><line class="tk" x1="107" x2="112"/><line class="tk" x1="136" x2="141"/></g>
<g class="ur" transform="rotate(-17.48)"><line class="tk" x1="107" x2="112"/><line class="tk" x1="136" x2="141"/></g>
<g class="mo" transform="rotate(-168)"><line class="tk" x1="107" x2="112"/><line class="tk" x1="136" x2="141"/></g>
<g class="pl" transform="rotate(-184.67)"><line class="tk" x1="107" x2="112"/><line class="tk" x1="136" x2="141"/></g>
<g class="ne" transform="rotate(-202.35)"><line class="tk" x1="107" x2="112"/><line class="tk" x1="136" x2="141"/></g>
<g class="ma" transform="rotate(-215.02)"><line class="tk" x1="107" x2="112"/><line class="tk" x1="136" x2="141"/></g>
<g class="su" transform="rotate(-215.47)"><line class="tk" x1="107" x2="112"/><line class="tk" x1="136" x2="141"/></g>
<g class="me" transform="rotate(-242.03)"><line class="tk" x1="107" x2="112"/><line class="tk" x1="136" x2="141"/></g>
<g class="ve" transform="rotate(-253.15)"><line class="tk" x1="107" x2="112"/><line class="tk" x1="136" x2="141"/></g>
<text class="hn" transform="rotate(-190.67) translate(124) rotate(190.67)">1</text>
<text class="hn" transform="rotate(-211.66) translate(124) rotate(211.66)">2</text>
<text class="hn" transform="rotate(-233.95) translate(124) rotate(233.95)">3</text>
<text class="hn" transform="rotate(-261.66) translate(124) rotate(261.66)">4</text>
<text class="hn" transform="rotate(-297.94) translate(124) rotate(297.94)">5</text>
<text class="hn" transform="rotate(-339.24) translate(124) rotate(339.24)">6</text>
<text class="hn" transform="rotate(-10.67) translate(124) rotate(10.67)">7</text>
<text class="hn" transform="rotate(-31.66) translate(124) rotate(31.66)">8</text>
<text class="hn" transform="rotate(-53.95) translate(124) rotate(53.95)">9</text>
<text class="hn" transform="rotate(-81.66) translate(124) rotate(81.66)">10</text>
<text class="hn" transform="rotate(-117.94) translate(124) rotate(117.94)">11</text>
<text class="hn" transform="rotate(-159.24) translate(124) rotate(159.24)">12</text>
<text class="cd" transform="rotate(-174.7) translate(253) rotate(174.7)">18°</text><text class="cs ai" transform="rotate(-180) translate(253) rotate(180)">♊&#xFE0E;</text><text class="cd" transform="rotate(-185) translate(253) rotate(185)">18'</text>
<text class="cd" transform="rotate(-196.03) translate(253) rotate(196.03)">09°</text><text class="cs wa" transform="rotate(-201.33) translate(253) rotate(201.33)">♋&#xFE0E;</text><text class="cd" transform="rotate(-206.33) translate(253) rotate(206.33)">38'</text>
<text class="cd" transform="rotate(-216.68) translate(253) rotate(216.68)">00°</text><text class="cs fi" transform="rotate(-221.98) translate(253) rotate(221.98)">♌&#xFE0E;</text><text class="cd" transform="rotate(-226.98) translate(253) rotate(226.98)">17'</text>
<text class="cd" transform="rotate(-240.62) translate(253) rotate(240.62)">24°</text><text class="cs fi" transform="rotate(-245.92) translate(253) rotate(245.92)">♌&#xFE0E;</text><text class="cd" transform="rotate(-250.92) translate(253) rotate(250.92)">13'</text>
<text class="cd" transform="rotate(-272.1) translate(253) rotate(272.1)">25°</text><text class="cs ea" transform="rotate(-277.4) translate(253) rotate(277.4)">♍&#xFE0E;</text><text class="cd" transform="rotate(-282.4) translate(253) rotate(282.4)">42'</text>
<text class="cd" transform="rotate(-313.17) translate(253) rotate(313.17)">06°</text><text class="cs wa" transform="rotate(-318.47) translate(253) rotate(318.47)">♏&#xFE0E;</text><text class="cd" transform="rotate(-323.47) translate(253) rotate(323.47)">46'</text>
<text class="cd" transform="rotate(-5.3) translate(253) rotate(5.3)">18°</text><text class="cs fi" transform="rotate(0) translate(253) rotate(0)">♐&#xFE0E;</text><text class="cd" transform="rotate(-355) translate(253) rotate(355)">18'</text>
<text class="cd" transform="rotate(-26.63) translate(253) rotate(26.63)">09°</text><text class="cs ea" transform="rotate(-21.33) translate(253) rotate(21.33)">♑&#xFE0E;</text><text class="cd" transform="rotate(-16.33) translate(253) rotate(16.33)">38'</text>
<text class="cd" transform="rotate(-47.28) translate(253) rotate(47.28)">00°</text><text class="cs ai" transform="rotate(-41.98) translate(253) rotate(41.98)">♒&#xFE0E;</text><text class="cd" transform="rotate(-36.98) translate(253) rotate(36.98)">17'</text>
<text class="cd" transform="rotate(-71.22) translate(253) rotate(71.22)">24°</text><text class="cs ai" transform="rotate(-65.92) translate(253) rotate(65.92)">♒&#xFE0E;</text><text class="cd" transform="rotate(-60.92) translate(253) rotate(60.92)">13'</text>
<text class="cd" transform="rotate(-102.7) translate(253) rotate(102.7)">25°</text><text class="cs wa" transform="rotate(-97.4) translate(253) rotate(97.4)">♓&#xFE0E;</text><text class="cd" transform="rotate(-92.4) translate(253) rotate(92.4)">42'</text>
<text class="cd" transform="rotate(-143.77) translate(253) rotate(143.77)">06°</text><text class="cs ea" transform="rotate(-138.47) translate(253) rotate(138.47)">♉&#xFE0E;</text><text class="cd" transform="rotate(-133.47) translate(253) rotate(133.47)">46'</text>
<text class="cs fi" transform="rotate(-116.7) translate(253) rotate(116.7)">♈&#xFE0E;</text>
<text class="cs ai" transform="rotate(-296.7) translate(253) rotate(296.7)">♎&#xFE0E;</text>
<text class="pg sa" transform="rotate(-87.4) translate(218) rotate(87.4)">♄</text>
<text class="pd rt" transform="rotate(-87.9) translate(191) rotate(87.9)">14°</text><text class="ps wa" transform="rotate(-87.9) translate(169) rotate(87.9)">♓&#xFE0E;</text><text class="pm rt" transform="rotate(-87.9) translate(151) rotate(87.9)">41'</text>
<text class="pg ur" transform="rotate(-18) translate(218) rotate(18)">♅</text>
<text class="pd rt" transform="rotate(-19.1) translate(191) rotate(19.1)">05°</text><text class="ps ea" transform="rotate(-19.1) translate(169) rotate(19.1)">♑&#xFE0E;</text><text class="pm rt" transform="rotate(-19.1) translate(151) rotate(19.1)">47'</text>
<use href="#moo" class="mo" x="-12" y="-12" width="24" height="24" transform="rotate(-168.1) translate(218) rotate(168.1)"/>
<text class="pd" transform="rotate(-167.5) translate(191) rotate(167.5)">06°</text><text class="ps ai" transform="rotate(-167.5) translate(169) rotate(167.5)">♊&#xFE0E;</text><text class="pm" transform="rotate(-167.5) translate(151) rotate(167.5)">18'</text>
<use href="#plu" class="pl" x="-10" y="-11" width="20" height="22" transform="rotate(-183.9) translate(218) rotate(183.9)"/>
<text class="pd" transform="rotate(-184) translate(191) rotate(184)">22°</text><text class="ps ai" transform="rotate(-184) translate(169) rotate(184)">♊&#xFE0E;</text><text class="pm" transform="rotate(-184) translate(151) rotate(184)">58'</text>
<text class="pg ne" transform="rotate(-203.8) translate(218) rotate(203.8)">♆</text>
<text class="pd" transform="rotate(-203.2) translate(191) rotate(203.2)">10°</text><text class="ps wa" transform="rotate(-203.2) translate(169) rotate(203.2)">♋&#xFE0E;</text><text class="pm" transform="rotate(-203.2) translate(151) rotate(203.2)">39'</text>
<text class="pg ma" transform="rotate(-212.4) translate(218) rotate(212.4)">♂</text>
<text class="pd" transform="rotate(-211.7) translate(191) rotate(211.7)">23°</text><text class="ps wa" transform="rotate(-211.7) translate(169) rotate(211.7)">♋&#xFE0E;</text><text class="pm" transform="rotate(-211.7) translate(151) rotate(211.7)">19'</text>
<use href="#sun" class="su" x="-11" y="-11" width="22" height="22" transform="rotate(-218.1) translate(218) rotate(218.1)"/>
<text class="pd" transform="rotate(-217.4) translate(191) rotate(217.4)">23°</text><text class="ps wa" transform="rotate(-217.4) translate(169) rotate(217.4)">♋&#xFE0E;</text><text class="pm" transform="rotate(-217.4) translate(151) rotate(217.4)">46'</text>
<text class="pg me" transform="rotate(-241) translate(218) rotate(241)">☿</text>
<text class="pd" transform="rotate(-240.4) translate(191) rotate(240.4)">20°</text><text class="ps fi" transform="rotate(-240.4) translate(169) rotate(240.4)">♌&#xFE0E;</text><text class="pm" transform="rotate(-240.4) translate(151) rotate(240.4)">20'</text>
<text class="pg ve" transform="rotate(-252.3) translate(218) rotate(252.3)">♀</text>
<text class="pd" transform="rotate(-251.5) translate(191) rotate(251.5)">01°</text><text class="ps ea" transform="rotate(-251.5) translate(169) rotate(251.5)">♍&#xFE0E;</text><text class="pm" transform="rotate(-251.5) translate(151) rotate(251.5)">27'</text>
</g>
</svg>
<div class="head">
<div class="title">200 Nov 2021 004</div>
<div class="kind">Natal</div>
<div class="meta">17 Jul 1906, Tue</div>
<div class="meta">2:10 AM EST +5:00</div>
<div class="meta">Philadelphia</div>
<div class="meta it">Tropical</div>
<div class="meta it">Placidus</div>
</div>
</section>

</div>
</body>
</html>
```

FILE: styles.css
```css
* { box-sizing: border-box; }

body {
  margin: 0;
  background: #ffffff;
  font-family: "Liberation Sans", Arial, sans-serif;
}

.sheet {
  display: grid;
  grid-template-columns: 646px 646px;
  grid-template-rows: 558px 557px;
  gap: 1px;
  width: max-content;
  margin: 3px 0 0 9px;
  background: #000;
  border: 1px solid #000;
}

.panel {
  display: grid;
  background: #fff;
  overflow: hidden;
}

.panel > * { grid-area: 1 / 1; }

.chart { display: block; }

.head {
  align-self: start;
  justify-self: start;
  color: #76643a;
}

.p1 .head { padding: 5px 0 0 43px; }
.p2 .head { padding: 1px 0 0 50px; }
.p3 .head { padding: 5px 0 0 29px; }
.p4 .head { padding: 3px 0 0 39px; }

.title { font-size: 20.5px; line-height: 22px; color: #6e5b2b; }
.kind  { font-size: 13px; line-height: 17px; color: #6e5b2b; }
.meta  { font-size: 10px; line-height: 14px; color: #76643a; }
.it    { font-style: italic; color: #86672e; }

/* chart structure */
.ring  { fill: #f8e2aa; stroke: #a8935b; stroke-width: 1.3; }
.field { fill: #fdf9ef; stroke: #a8935b; stroke-width: 1.3; }
.hl    { stroke: #a39878; stroke-width: 0.9; }
.ax    { stroke: #7f6c33; stroke-width: 1.8; }
.axp   { fill: #7f6c33; }
.asp   { stroke: #e8413c; stroke-width: 0.8; }
.tk    { stroke: currentColor; stroke-width: 1.2; }

/* chart text */
svg text {
  fill: currentColor;
  color: #151515;
  text-anchor: middle;
  dominant-baseline: central;
  font-family: "Liberation Sans", Arial, sans-serif;
}

.cd { font-size: 11px; }
.hn { font-size: 10px; }
.pd { font-size: 14px; }
.pm { font-size: 11px; }
.cs, .pg, .ps {
  font-family: "DejaVu Sans", sans-serif;
  font-weight: bold;
  stroke: currentColor;
  stroke-width: 0.5px;
}
.cs { font-size: 24px; }
.pg { font-size: 28px; }
.pg.ne { font-size: 32px; }
.pg.sa { font-size: 30px; }
.ps { font-size: 19px; stroke-width: 0.3px; }

/* element colours */
.fi { color: #e8332a; }
.ea { color: #7b7a22; }
.ai { color: #49bfc0; }
.wa { color: #1a2ee6; }
.rt { color: #e8413c; }

/* planet colours */
.su { color: #9c5319; }
.mo { color: #a3581b; }
.me { color: #9a35b8; }
.ve { color: #3aa6a6; }
.ma { color: #e34848; }
.sa { color: #8c1c1c; }
.ur { color: #4a4ad6; }
.ne { color: #3a9a9a; }
.pl { color: #8c1c1c; }

/* highlight discs */
.hlc  { opacity: 0.5; }
.h-ma { fill: #f05a5a; }
.h-ve { fill: #f082d7; }
.h-ne { fill: #28827a; opacity: 0.62; }
.h-ur { fill: #b96e7d; }
.h-su { fill: #f0823c; }
```
